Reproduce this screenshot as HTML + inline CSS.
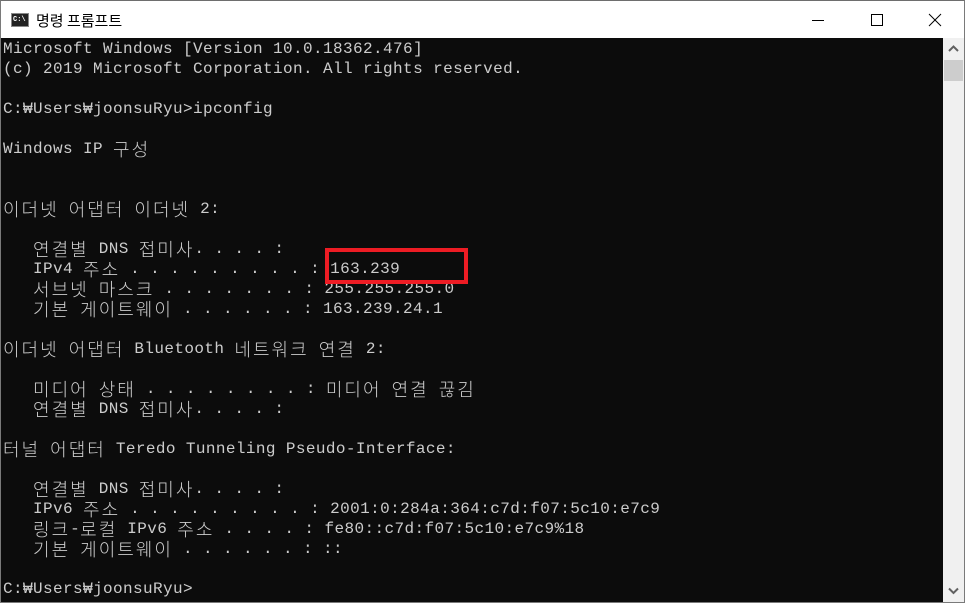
<!DOCTYPE html>
<html><head><meta charset="utf-8"><style>
html,body{margin:0;padding:0;width:965px;height:603px;overflow:hidden;background:#fff}
.win{position:absolute;left:0;top:0;width:963px;height:601px;border:1px solid #7a7a7a;border-top-color:#6e6e6e}
.title{position:absolute;left:0;top:0;width:963px;height:37px;background:#fff}
.ttxt{position:absolute;left:35px;top:9px;font:15px "Noto Sans CJK KR","Liberation Sans",sans-serif;color:#000}
.ico{position:absolute;left:10px;top:12px;width:18px;height:14px;background:#222;border:1px solid #888;box-sizing:border-box}
.ico span{position:absolute;left:1px;top:2px;font:bold 7px "Liberation Mono",monospace;color:#fff;line-height:8px}
.con{position:absolute;left:0;top:37px;width:942px;height:564px;background:#0c0c0c;overflow:hidden}
pre{margin:0;padding:1px 0 0 2px;font:16px/20px "Liberation Mono",monospace;letter-spacing:0.4px;color:#cccccc;white-space:pre}
.k{display:inline-block;height:20px;line-height:20px;vertical-align:top;font:300 18px/20px "Noto Sans CJK KR",sans-serif;letter-spacing:2px;overflow:visible}
.sb{position:absolute;left:942px;top:37px;width:21px;height:564px;background:#f0f0f0}
.thumb{position:absolute;left:1px;top:22px;width:19px;height:21px;background:#cdcdcd}
.box{position:absolute;left:325px;top:248px;width:143px;height:36px;border:4px solid #ed1c24;box-sizing:border-box}
</style></head><body>
<div class="win">
<div class="title">
<div class="ico"><span>C:\</span></div>
<div class="ttxt">명령 프롬프트</div>
<svg style="position:absolute;left:810px;top:12px" width="150" height="16">
<line x1="1" y1="7.5" x2="13" y2="7.5" stroke="#000" stroke-width="1"/>
<rect x="60.5" y="1.5" width="11" height="11" fill="none" stroke="#000"/>
<line x1="118" y1="1" x2="130" y2="13" stroke="#000"/>
<line x1="130" y1="1" x2="118" y2="13" stroke="#000"/>
</svg>
</div>
<div class="con"><pre>Microsoft Windows [Version 10.0.18362.476]
(c) 2019 Microsoft Corporation. All rights reserved.

C:₩Users₩joonsuRyu&gt;ipconfig

Windows IP <span class="k">구성</span>


<span class="k">이더넷</span> <span class="k">어댑터</span> <span class="k">이더넷</span> 2:

   <span class="k">연결별</span> DNS <span class="k">접미사</span>. . . . :
   IPv4 <span class="k">주소</span> . . . . . . . . . : 163.239
   <span class="k">서브넷</span> <span class="k">마스크</span> . . . . . . . : 255.255.255.0
   <span class="k">기본</span> <span class="k">게이트웨이</span> . . . . . . : 163.239.24.1

<span class="k">이더넷</span> <span class="k">어댑터</span> Bluetooth <span class="k">네트워크</span> <span class="k">연결</span> 2:

   <span class="k">미디어</span> <span class="k">상태</span> . . . . . . . . : <span class="k">미디어</span> <span class="k">연결</span> <span class="k">끊김</span>
   <span class="k">연결별</span> DNS <span class="k">접미사</span>. . . . :

<span class="k">터널</span> <span class="k">어댑터</span> Teredo Tunneling Pseudo-Interface:

   <span class="k">연결별</span> DNS <span class="k">접미사</span>. . . . :
   IPv6 <span class="k">주소</span> . . . . . . . . . : 2001:0:284a:364:c7d:f07:5c10:e7c9
   <span class="k">링크</span>-<span class="k">로컬</span> IPv6 <span class="k">주소</span> . . . . : fe80::c7d:f07:5c10:e7c9%18
   <span class="k">기본</span> <span class="k">게이트웨이</span> . . . . . . : ::

C:₩Users₩joonsuRyu&gt;</pre></div>
<div class="sb">
<svg style="position:absolute;left:5px;top:7px" width="11" height="8"><polyline points="1,6 5.5,1.5 10,6" fill="none" stroke="#606060" stroke-width="2"/></svg>
<div class="thumb"></div>
<svg style="position:absolute;left:5px;top:549px" width="11" height="8"><polyline points="1,1.5 5.5,6 10,1.5" fill="none" stroke="#606060" stroke-width="2"/></svg>
</div>
</div>
<div class="box"></div>
</body></html>
